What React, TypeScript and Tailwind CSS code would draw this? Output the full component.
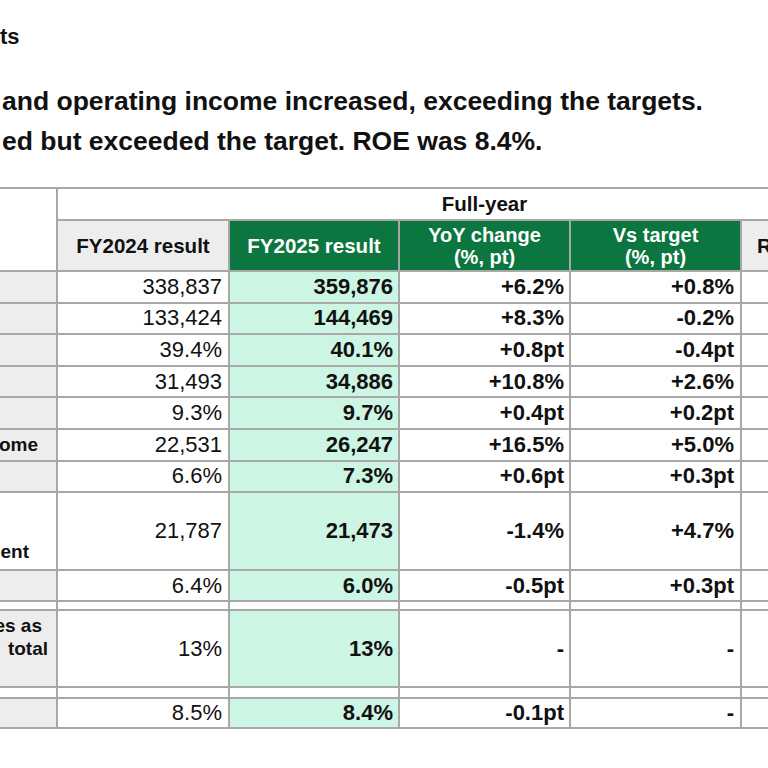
import React from "react";

type Row = {
  label?: React.ReactNode;
  labelBg?: string;
  prev: string;
  curr: string;
  yoy: string;
  target: string;
};

const rows: Row[] = [
  { prev: "338,837", curr: "359,876", yoy: "+6.2%", target: "+0.8%" },
  { prev: "133,424", curr: "144,469", yoy: "+8.3%", target: "-0.2%" },
  { prev: "39.4%", curr: "40.1%", yoy: "+0.8pt", target: "-0.4pt" },
  { prev: "31,493", curr: "34,886", yoy: "+10.8%", target: "+2.6%" },
  { prev: "9.3%", curr: "9.7%", yoy: "+0.4pt", target: "+0.2pt" },
  {
    label: <span className="shrink-0 pr-[18px]">ome</span>,
    prev: "22,531",
    curr: "26,247",
    yoy: "+16.5%",
    target: "+5.0%",
  },
  { prev: "6.6%", curr: "7.3%", yoy: "+0.6pt", target: "+0.3pt" },
  {
    label: <span className="shrink-0 self-end pb-[6px] pr-[27px]">ent</span>,
    labelBg: "bg-white",
    prev: "21,787",
    curr: "21,473",
    yoy: "-1.4%",
    target: "+4.7%",
  },
  { prev: "6.4%", curr: "6.0%", yoy: "-0.5pt", target: "+0.3pt" },
];

const Gap = () => (
  <>
    {Array.from({ length: 6 }).map((_, i) => (
      <div key={i} className="bg-white" />
    ))}
  </>
);

const DataRow = ({ row }: { row: Row }) => (
  <>
    <div
      className={`flex items-center justify-end overflow-hidden whitespace-nowrap text-[19px] font-bold leading-[23px] ${
        row.labelBg ?? "bg-[#ededed]"
      }`}
    >
      {row.label}
    </div>
    <div className="flex items-center justify-end bg-white pr-[6px]">{row.prev}</div>
    <div className="flex items-center justify-end bg-[#cdf5e3] pr-[5px] font-bold">{row.curr}</div>
    <div className="flex items-center justify-end bg-white pr-[5px] font-bold">{row.yoy}</div>
    <div className="flex items-center justify-end bg-white pr-[6px] font-bold">{row.target}</div>
    <div className="bg-white" />
  </>
);

export default function App() {
  return (
    <div
      className="h-[768px] w-[768px] overflow-hidden bg-white text-[#111]"
      style={{ fontFamily: '"Liberation Sans", Arial, sans-serif' }}
    >
      <div className="pt-[23px] text-[22px] font-bold leading-[28px]">ts</div>

      <div className="mt-[30px] pl-[2px] text-[26.5px] font-bold leading-[40px] whitespace-nowrap">
        <p>and operating income increased, exceeding the targets.</p>
        <p>ed but exceeded the target. ROE was 8.4%.</p>
      </div>

      <div className="mt-[26px] w-[911px] bg-[#a8a8a8] py-[2px]">
        <div className="grid grid-cols-[56px_170px_168px_169px_169px_169px] grid-rows-[30px_49px_29.6px_29.6px_29.6px_29.6px_29.6px_29.6px_29.6px_76px_29px_7px_75px_9px_28px] gap-[2px] text-[22px] leading-[26px]">
          <div className="row-span-2 bg-white" />
          <div className="col-span-5 flex items-center justify-center bg-white text-[20.5px] font-bold">
            Full-year
          </div>

          <div className="flex items-center justify-center bg-[#ededed] text-[20.5px] font-bold">
            FY2024 result
          </div>
          <div className="flex items-center justify-center bg-[#0b7640] text-[20.5px] font-bold text-white">
            FY2025 result
          </div>
          <div className="flex flex-col items-center justify-center bg-[#0b7640] text-[20px] font-bold leading-[22px] text-white">
            <span>YoY change</span>
            <span>(%, pt)</span>
          </div>
          <div className="flex flex-col items-center justify-center bg-[#0b7640] text-[20px] font-bold leading-[22px] text-white">
            <span>Vs target</span>
            <span>(%, pt)</span>
          </div>
          <div className="flex items-center bg-[#ededed] pl-[15px] text-[20.5px] font-bold">R</div>

          {rows.map((row, i) => (
            <DataRow key={i} row={row} />
          ))}

          <Gap />

          <DataRow
            row={{
              label: (
                <div className="flex shrink-0 flex-col items-end">
                  <span className="pr-[14px]">es as</span>
                  <span className="pr-[8px]">total</span>
                  <span>&nbsp;</span>
                </div>
              ),
              prev: "13%",
              curr: "13%",
              yoy: "-",
              target: "-",
            }}
          />

          <Gap />

          <DataRow row={{ prev: "8.5%", curr: "8.4%", yoy: "-0.1pt", target: "-" }} />
        </div>
      </div>
    </div>
  );
}
